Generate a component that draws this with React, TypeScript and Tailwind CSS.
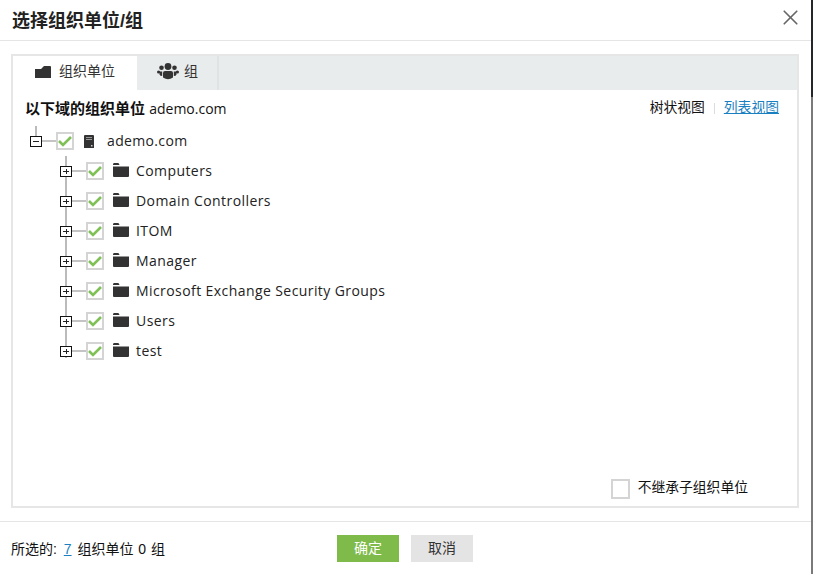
import { X } from 'lucide-react'

const ous = ['Computers', 'Domain Controllers', 'ITOM', 'Manager', 'Microsoft Exchange Security Groups', 'Users', 'test']

function Check() {
  return (
    <span className="relative flex h-[18px] w-[18px] shrink-0 items-center justify-center border-2 border-[#d4d4d4] bg-white">
      <svg width="14" height="12" viewBox="0 0 14 12">
        <path d="M1 6 L5 10 L13 2" fill="none" stroke="#7fc157" strokeWidth="2.6" />
      </svg>
    </span>
  )
}

function Toggle({ open }: { open?: boolean }) {
  return (
    <span className="relative h-[11px] w-[12px] shrink-0 border border-[#111] bg-white">
      <span className="absolute left-[2px] top-[4px] h-px w-[6px] bg-[#222]" />
      {!open && <span className="absolute left-[4.5px] top-[2px] h-[5px] w-px bg-[#222]" />}
    </span>
  )
}

function FolderIcon() {
  return (
    <svg width="16" height="14" viewBox="0 0 16 14" className="shrink-0">
      <path d="M0 1.5 Q0 0 1 0 H5 Q6 0 6.5 2 H0 Z M0 3.5 H16 V13 Q16 14 15 14 H1 Q0 14 0 13 Z" fill="#333" />
    </svg>
  )
}

function TabFolderIcon() {
  return (
    <svg width="16" height="12" viewBox="0 0 16 12" className="shrink-0">
      <path d="M0 3 H6 L9 0 H15 Q16 0 16 1 V12 H0 Z" fill="#333" />
    </svg>
  )
}

function TreeRow({ label, last }: { label: string; last?: boolean }) {
  return (
    <div className="relative flex h-[30px] items-center pl-[47px]">
      <span className={`absolute left-[52px] top-0 w-[2px] bg-[#bbbbbb] ${last ? 'h-[22px]' : 'bottom-0'}`} />
      <span className="relative z-10 flex items-center">
        <Toggle />
        <span className="h-[2px] w-[14px] bg-[#c4c4c4]" />
        <Check />
      </span>
      <span className="ml-[9px] -translate-y-[1px]"><FolderIcon /></span>
      <span className="ml-[7px] -translate-y-[1px] font-['Open_Sans',sans-serif] text-[14px] tracking-[0.42px] text-[#222]">{label}</span>
    </div>
  )
}

export default function App() {
  return (
    <div className="relative flex h-[574px] w-[813px] flex-col bg-white font-['Liberation_Sans','Noto_Sans_CJK_SC',sans-serif] text-[#111]">
      {/* page scrollbar peeking out on the right */}
      <span className="absolute right-0 top-0 h-[97px] w-[2px] bg-[#23272b]" />
      <span className="absolute bottom-0 right-0 top-[97px] w-[2px] bg-[#7a7a7a]" />

      <div className="flex h-[41px] shrink-0 items-center justify-between border-b border-[#e5e5e5] pl-[12px] pr-[10px]">
        <h1 className="translate-y-[1px] text-[18px] font-bold leading-none text-[#222]">选择组织单位/组</h1>
        <X size={25} strokeWidth={1.6} className="-translate-y-[3px] text-[#666]" />
      </div>

      <div className="mx-[11px] mt-[13px] flex h-[454px] w-[788px] shrink-0 flex-col border-2 border-[#e6e6e6]">
        <div className="flex h-[34px] shrink-0 bg-[#e9eced]">
          <div className="flex h-[35px] w-[124px] items-center gap-[8px] bg-white pb-[4px] pl-[22px] text-[14px] text-[#333]">
            <TabFolderIcon />
            组织单位
          </div>
          <div className="flex w-[82px] items-center gap-[5px] border-r-2 border-[#e0e3e4] pb-[3px] pl-[20px] text-[14px] text-[#333]">
            <svg width="22" height="17" viewBox="0 0 22 17">
              <circle cx="11" cy="3.5" r="3.4" fill="#333" />
              <circle cx="4.5" cy="4.8" r="2.3" fill="#333" />
              <circle cx="17.5" cy="4.8" r="2.3" fill="#333" />
              <circle cx="1.6" cy="9" r="1.6" fill="#333" />
              <circle cx="20.4" cy="9" r="1.6" fill="#333" />
              <path d="M6 10 Q6 8 8 8 H14 Q16 8 16 10 V14.5 Q11 18 6 14.5 Z" fill="#333" />
              <path d="M2.5 8.5 H5.2 V13 Q3 13 2.5 11.5 Z M19.5 8.5 H16.8 V13 Q19 13 19.5 11.5 Z" fill="#333" />
            </svg>
            组
          </div>
        </div>

        <div className="flex min-h-0 flex-1 flex-col">
          <div className="flex h-[36px] shrink-0 items-center justify-between pl-[12px] pr-[18px]">
            <div className="text-[15px] leading-none">
              <span className="font-bold">以下域的组织单位</span>{' '}
              <span className="font-['Open_Sans',sans-serif] text-[14px]">ademo.com</span>
            </div>
            <div className="flex items-center text-[13.8px]">
              <span>树状视图</span>
              <span className="mx-[9px] h-[11px] w-px bg-[#dcdcdc]" />
              <span className="text-[#1a7fc1] underline">列表视图</span>
            </div>
          </div>

          <div className="relative flex h-[30px] items-center pl-[17px]">
            <span className="absolute left-[22px] top-0 h-[10px] w-[2px] bg-[#bbbbbb]" />
            <Toggle open />
            <span className="h-[2px] w-[14px] bg-[#c4c4c4]" />
            <Check />
            <svg width="10" height="13" viewBox="0 0 10 13" className="ml-[10px] shrink-0">
              <path d="M0 1 Q0 0 1 0 H9 Q10 0 10 1 V13 H0 Z" fill="#333" />
              <rect x="2" y="2" width="6" height="1" fill="#999" />
              <rect x="2" y="4" width="6" height="1" fill="#999" />
              <rect x="7" y="10" width="1.5" height="1.5" fill="#ccc" />
            </svg>
            <span className="ml-[13px] -translate-y-[1px] font-['Open_Sans',sans-serif] text-[14px] tracking-[0.35px] text-[#222]">ademo.com</span>
          </div>

          {ous.map((o, i) => <TreeRow key={o} label={o} last={i === ous.length - 1} />)}

          <div className="mt-auto flex items-center justify-end pb-[7px] pr-[49px]">
            <span className="h-[20px] w-[19px] border-2 border-[#d4d4d4]" />
            <span className="ml-[8px] text-[13.8px]">不继承子组织单位</span>
          </div>
        </div>
      </div>

      <div className="mt-[13px] flex h-[53px] shrink-0 items-center border-t border-[#e5e5e5] pl-[11px]">
        <div className="w-[326px] pt-[2px] text-[14px]">
          所选的: <span className="pl-[3px] pr-[2px] text-[#1a7fc1] underline">7</span> 组织单位 <span className="mx-[1px]">0</span> 组
        </div>
        <button className="h-[27px] w-[62px] bg-[#7fbb4a] text-[14px] text-white">确定</button>
        <button className="ml-[12px] h-[27px] w-[62px] bg-[#e4e4e4] text-[14px] text-[#333]">取消</button>
      </div>
    </div>
  )
}
